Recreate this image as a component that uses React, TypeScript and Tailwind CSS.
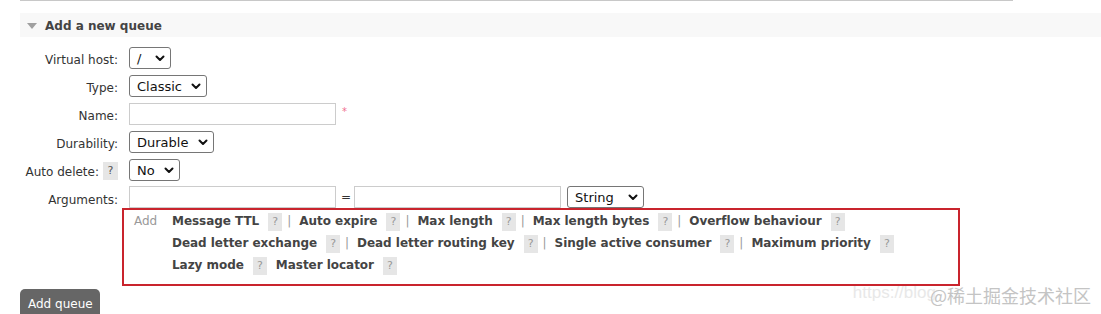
const chevron = (
    <svg width="10" height="7" viewBox="0 0 10 7" className="shrink-0">
        <path d="M1.5 1.5 L5 5 L8.5 1.5" fill="none" stroke="#111" strokeWidth="2" strokeLinecap="round" strokeLinejoin="round" />
    </svg>
);

function FakeSelect({ value, width }: { value: string; width: string }) {
    return (
        <div className={`flex h-[22px] items-center justify-between rounded-[3px] border border-[#767676] bg-white pl-[7px] pr-[5px] text-[#111] ${width}`}>
            <span className="text-[13px] leading-none">{value}</span>
            {chevron}
        </div>
    );
}

function Help() {
    return <span className="inline-flex h-[18px] w-[14px] items-center justify-center bg-[#e6e6e6] text-[11px] font-normal text-[#999]">?</span>;
}

function Sep() {
    return <span className="ml-[5px] mr-[8px] font-normal text-[#999]">|</span>;
}

interface ArgLink {
    label: string;
    sep: boolean;
}

const argLines: ArgLink[][] = [
    [
        { label: 'Message TTL', sep: true },
        { label: 'Auto expire', sep: true },
        { label: 'Max length', sep: true },
        { label: 'Max length bytes', sep: true },
        { label: 'Overflow behaviour', sep: false },
    ],
    [
        { label: 'Dead letter exchange', sep: true },
        { label: 'Dead letter routing key', sep: true },
        { label: 'Single active consumer', sep: true },
        { label: 'Maximum priority', sep: false },
    ],
    [
        { label: 'Lazy mode', sep: false },
        { label: 'Master locator', sep: false },
    ],
];

function Row({ label, children, help, tall = true }: { label: string; children: React.ReactNode; help?: boolean; tall?: boolean }) {
    return (
        <div className={`flex ${tall ? 'h-[28px] items-center' : 'h-[24px] items-end'}`}>
            <div className={`flex w-[118px] items-center justify-end pt-[4px] leading-[22px] ${tall ? '' : '-mb-[3px]'}`}>
                <span>{label}</span>
                {help && (
                    <span className="ml-[4px] -mt-[3px] inline-flex h-[18px] w-[15px] items-center justify-center bg-[#e6e6e6] text-[11px] text-[#555]">?</span>
                )}
            </div>
            <div className="ml-[11px] flex items-center">{children}</div>
        </div>
    );
}

export default function App() {
    return (
        <div className="relative h-[314px] w-[1101px] overflow-hidden bg-white font-['DejaVu_Sans',Verdana,sans-serif] text-[12px] text-[#333]">
            <div className="ml-[20px] h-px w-[993px] bg-[#c8c8c8]" />

            <div className="ml-[20px] mt-[12px] flex h-[24px] items-center bg-[#f8f8f8] pt-px">
                <svg width="10" height="6" viewBox="0 0 10 6" className="ml-[7px]">
                    <path d="M0 0 L10 0 L5 6 Z" fill="#a0a0a0" />
                </svg>
                <span className="ml-[8px] text-[12px] font-bold text-[#444]">Add a new queue</span>
            </div>

            <div className="mt-[7px]">
                <Row label="Virtual host:">
                    <FakeSelect value="/" width="w-[42px]" />
                </Row>
                <Row label="Type:">
                    <FakeSelect value="Classic" width="w-[78px]" />
                </Row>
                <Row label="Name:">
                    <div className="h-[22px] w-[207px] border border-[#ccc] bg-white" />
                    <span className="ml-[6px] -mt-[6px] text-[10px] text-[#f07090]">*</span>
                </Row>
                <Row label="Durability:">
                    <FakeSelect value="Durable" width="w-[85px]" />
                </Row>
                <Row label="Auto delete:" help>
                    <FakeSelect value="No" width="w-[51px]" />
                </Row>
                <Row label="Arguments:" tall={false}>
                    <div className="h-[22px] w-[207px] border border-[#ccc] bg-white" />
                    <span className="ml-[5px] mr-[3px] text-[12px]">=</span>
                    <div className="h-[22px] w-[207px] border border-[#ccc] bg-white" />
                    <div className="ml-[6px]">
                        <FakeSelect value="String" width="w-[77px]" />
                    </div>
                </Row>
            </div>

            <div className="ml-[122px] flex h-[78px] w-[838px] border-2 border-[#c9242d] pl-[10px] leading-[22px]">
                <div className="w-[38px] text-[#999]">Add</div>
                <div className="flex flex-col">
                    {argLines.map((line, i) => (
                        <div key={i} className="flex h-[22px] items-center font-bold tracking-[-0.04px] text-[#444]">
                            {line.map((item, j) => (
                                <span key={item.label} className={`flex items-center ${j > 0 && !line[j - 1].sep ? 'ml-[9px]' : ''}`}>
                                    <span>{item.label}</span>
                                    <span className="ml-[9px]">
                                        <Help />
                                    </span>
                                    {item.sep && <Sep />}
                                </span>
                            ))}
                        </div>
                    ))}
                </div>
            </div>

            <div className="ml-[20px] mt-[3px] flex h-[30px] w-[80px] items-center rounded-t-[5px] bg-[#666] pl-[8px] text-white">Add queue</div>

            <div className="absolute bottom-[8px] right-[10px] flex items-end">
                <span className="mb-[1px] font-['Liberation_Sans',sans-serif] text-[17px] text-[#e8e8e8]">https://blog</span>
                <span className="-ml-[6px] font-['Noto_Sans_CJK_SC',sans-serif] text-[18px] leading-[22px] text-[#c4c4c4] [text-shadow:0_0_2px_#fff]">@稀土掘金技术社区</span>
            </div>
        </div>
    );
}
